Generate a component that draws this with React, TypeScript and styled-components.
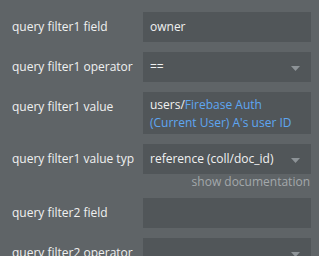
import styled, { createGlobalStyle } from "styled-components";

const GlobalStyle = createGlobalStyle`
  html, body {
    margin: 0;
    padding: 0;
    background: #5f6467;
    overflow: hidden;
  }
  body {
    font-family: "Open Sans", "Liberation Sans", sans-serif;
  }
`;

const color = {
  page: "#5f6467",
  box: "#515659",
  label: "#f0f1f1",
  doc: "#a3a8ab",
  link: "#5ea6f2",
  caret: "#8d9397",
};

const Panel = styled.div`
  display: flex;
  flex-direction: column;
  margin-top: -12px;
  width: 319px;
  background: ${color.page};
`;

const DocLink = styled.div`
  font-size: 12px;
  line-height: 16px;
  height: 16px;
  color: ${color.doc};
  text-align: right;
  padding-right: 9px;
  margin-bottom: 8px;
  cursor: pointer;
`;

const Rows = styled.div`
  display: flex;
  flex-direction: column;
  gap: 10px;
`;

const Row = styled.div`
  display: flex;
  align-items: flex-start;
  padding: 0 8px 0 12px;
`;

const Label = styled.div`
  flex: 0 0 122px;
  margin-right: 9px;
  padding-top: 6px;
  font-size: 12px;
  line-height: 18px;
  color: ${color.label};
  white-space: nowrap;
  overflow: hidden;
`;

const Field = styled.div<{ $multiline?: boolean }>`
  flex: 1;
  min-height: 30px;
  box-sizing: border-box;
  padding: ${(p) => (p.$multiline ? "4px 7px 2px" : "6px 7px")};
  background: ${color.box};
  font-size: 12px;
  line-height: 18px;
  color: ${color.label};
`;

const Dynamic = styled.span`
  color: ${color.link};
`;

const Select = styled(Field)`
  display: flex;
  align-items: center;
  padding-right: 11px;
`;

const SelectValue = styled.span`
  flex: 1;
  white-space: nowrap;
  overflow: hidden;
`;

const Caret = styled.svg`
  flex: 0 0 auto;
  margin-top: 3px;
`;

function DropCaret() {
  return (
    <Caret width="9" height="5" viewBox="0 0 9 5">
      <path d="M0 0 H9 L4.5 5 Z" fill={color.caret} />
    </Caret>
  );
}

interface PropertyProps {
  label: string;
  value?: React.ReactNode;
  dropdown?: boolean;
  multiline?: boolean;
}

function Property({ label, value, dropdown, multiline }: PropertyProps) {
  return (
    <Row>
      <Label>{label}</Label>
      {dropdown ? (
        <Select>
          <SelectValue>{value}</SelectValue>
          <DropCaret />
        </Select>
      ) : (
        <Field $multiline={multiline}>{value}</Field>
      )}
    </Row>
  );
}

export default function App() {
  return (
    <>
      <GlobalStyle />
      <Panel>
        <DocLink>show documentation</DocLink>
        <Rows>
          <Property label="query filter1 field" value="owner" />
          <Property label="query filter1 operator" value="==" dropdown />
          <Property
            label="query filter1 value"
            multiline
            value={
              <>
                users/<Dynamic>Firebase Auth (Current User) A's user ID</Dynamic>
              </>
            }
          />
          <Property
            label="query filter1 value type"
            value="reference (coll/doc_id)"
            dropdown
          />
        </Rows>
        <DocLink>show documentation</DocLink>
        <Rows>
          <Property label="query filter2 field" />
          <Property label="query filter2 operator" dropdown />
        </Rows>
      </Panel>
    </>
  );
}
